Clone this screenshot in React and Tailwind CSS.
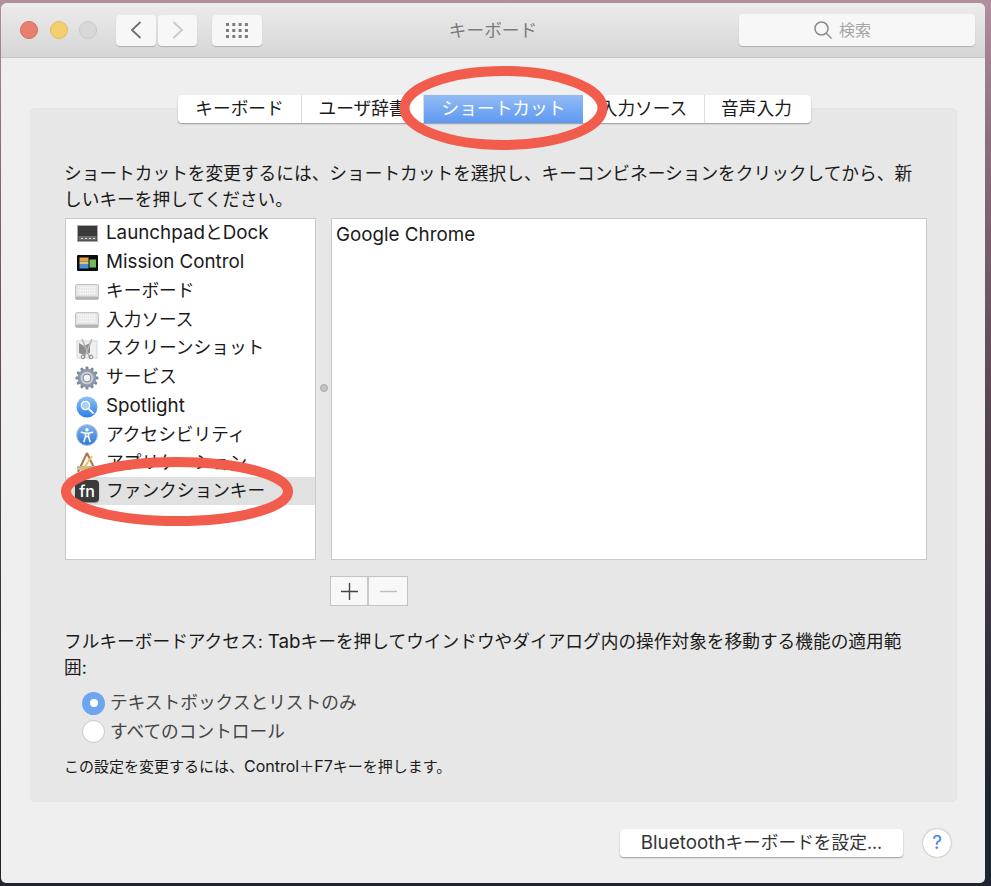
import React from "react";

const tabs = [
  { label: "キーボード", width: "w-[124px]" },
  { label: "ユーザ辞書", width: "w-[122px]" },
  { label: "ショートカット", width: "w-[159px]", active: true },
  { label: "入力ソース", width: "w-[122px]" },
  { label: "音声入力", width: "w-[106px] pr-[3px]" },
];

function ScreenIcon() {
  return (
    <svg width="21" height="17" viewBox="0 0 21 17">
      <rect x="0.5" y="0.5" width="20" height="16" fill="#3a3a3a" stroke="#aaa" />
      <rect x="1.500" y="11" width="18" height="4.500" fill="#6b6b6b" />
      <path d="M4 13.500h2M8 13.500h2M12 13.500h2M16 13.500h2" stroke="#ddd" strokeWidth="1.200" />
    </svg>
  );
}

function MissionIcon() {
  return (
    <svg width="21" height="16" viewBox="0 0 21 16">
      <rect width="21" height="16" rx="1" fill="#0c0c0c" />
      <rect x="2.500" y="2.500" width="9" height="4" fill="#e8a04a" />
      <rect x="2.500" y="6.500" width="9" height="2.500" fill="#d9c27a" />
      <rect x="2.500" y="9" width="9" height="4.500" fill="#4f8fdc" />
      <rect x="12.500" y="4.500" width="6.500" height="8" fill="#74b85c" />
    </svg>
  );
}

function KeyboardIcon() {
  return (
    <svg width="24" height="16" viewBox="0 0 24 16">
      <rect x="0.500" y="0.500" width="23" height="15" rx="1.500" fill="#e4e4e4" stroke="#c4c4c4" />
      <rect x="0.500" y="12.500" width="23" height="3" rx="1.500" fill="#b4b4b4" />
      <path d="M3 3.500h18M3 6.500h18M3 9.500h18" stroke="#fafafa" strokeWidth="2" strokeDasharray="1.500 0.700" />
    </svg>
  );
}

function ScissorsIcon() {
  return (
    <svg width="22" height="22" viewBox="0 0 22 22">
      <rect x="1" y="3" width="20" height="17" fill="#efefef" stroke="#d6d6d6" />
      <path d="M3 5l5 3v9l-5-2zM8 8l6-3v10l-6 2z" fill="#8d8d8d" />
      <path d="M6 1l8 19M16 1L8 20" stroke="#b5b5b5" strokeWidth="1.600" />
      <circle cx="7" cy="19" r="1.800" fill="none" stroke="#8a8a8a" />
      <circle cx="15" cy="19" r="1.800" fill="none" stroke="#8a8a8a" />
    </svg>
  );
}

function GearIcon() {
  const teeth = [0, 30, 60, 90, 120, 150];
  return (
    <svg width="24" height="24" viewBox="0 0 24 24">
      {teeth.map((deg) => (
        <rect key={deg} x="10.500" y="0.500" width="3" height="23" rx="1" fill="#7c8698" transform={`rotate(${deg} 12 12)`} />
      ))}
      <circle cx="12" cy="12" r="9.300" fill="#8e98a9" />
      <circle cx="12" cy="12" r="6.500" fill="#c9ced6" />
      <circle cx="12" cy="12" r="4" fill="#f4f4f4" stroke="#7c8698" />
    </svg>
  );
}

function SpotlightIcon() {
  return (
    <svg width="22" height="22" viewBox="0 0 22 22">
      <defs>
        <linearGradient id="spot" x1="0" y1="0" x2="0" y2="1">
          <stop offset="0" stopColor="#8fc2f7" />
          <stop offset="1" stopColor="#2c7fe8" />
        </linearGradient>
      </defs>
      <circle cx="11" cy="11" r="10.500" fill="url(#spot)" />
      <circle cx="9.500" cy="9.500" r="4.200" fill="#a9d0f8" stroke="#fff" strokeWidth="1.200" />
      <path d="M12.800 12.800l4.200 4.200" stroke="#fff" strokeWidth="1.800" strokeLinecap="round" />
    </svg>
  );
}

function AccessIcon() {
  return (
    <svg width="22" height="22" viewBox="0 0 22 22">
      <defs>
        <linearGradient id="acc" x1="0" y1="0" x2="0" y2="1">
          <stop offset="0" stopColor="#83b4ea" />
          <stop offset="1" stopColor="#2f78d6" />
        </linearGradient>
      </defs>
      <circle cx="11" cy="11" r="10.500" fill="url(#acc)" stroke="#b9c6d6" />
      <circle cx="11" cy="5.800" r="1.700" fill="#fff" />
      <path d="M5.500 8.300l4 1v3.200L8 17.500M16.500 8.300l-4 1v3.200l1.500 5M9.500 9.300h3M9.600 12.500h2.800" stroke="#fff" strokeWidth="1.600" fill="none" strokeLinecap="round" />
    </svg>
  );
}

function AppIcon() {
  return (
    <svg width="24" height="24" viewBox="0 0 24 24">
      <path d="M12 2L3 21M12 2l9 19" stroke="#a9744f" strokeWidth="2" fill="none" />
      <path d="M2 17h20" stroke="#cdb690" strokeWidth="4" />
      <path d="M17 5L5 23" stroke="#e2c25a" strokeWidth="2" />
    </svg>
  );
}

function FnIcon() {
  return (
    <div className="flex h-[22px] w-[24px] items-center justify-center rounded-[4px] bg-[#3b3b3b] text-[16px] font-medium leading-none text-white shadow-[0_1px_1px_rgba(0,0,0,0.4)]">
      fn
    </div>
  );
}

const items = [
  {
    label: (
      <>
        <span className="text-[18.800px]">Launchpad</span>と<span className="text-[18.800px]">Dock</span>
      </>
    ),
    icon: <ScreenIcon />,
    height: "h-[29px]",
  },
  { label: <span className="text-[18.800px]">Mission Control</span>, icon: <MissionIcon />, height: "h-[29px]" },
  { label: "キーボード", icon: <KeyboardIcon />, height: "h-[29px]" },
  { label: "入力ソース", icon: <KeyboardIcon />, height: "h-[28px]" },
  { label: "スクリーンショット", icon: <ScissorsIcon />, height: "h-[29px]" },
  { label: "サービス", icon: <GearIcon />, height: "h-[29px]" },
  { label: <span className="text-[18.800px]">Spotlight</span>, icon: <SpotlightIcon />, height: "h-[29px]" },
  { label: "アクセシビリティ", icon: <AccessIcon />, height: "h-[28px]" },
  { label: "アプリケーション", icon: <AppIcon />, height: "h-[28px]" },
  { label: "ファンクションキー", icon: <FnIcon />, height: "h-[28px]", selected: true },
];

export default function App() {
  return (
    <div
      className="relative h-[886px] w-[991px] overflow-hidden bg-[linear-gradient(180deg,#b0909f_0%,#8d6f7f_15%,#5a4650_45%,#1e2530_90%)] pl-px pt-[3px] text-[#1a1a1a]"
      style={{ fontFamily: 'Inter, "Noto Sans CJK JP", sans-serif' }}
    >
      <div className="flex h-[880px] w-[984px] flex-col overflow-hidden rounded-t-[6px] rounded-b-[5px] bg-[#efefef]">
        {/* title bar */}
        <div className="relative flex h-[55px] shrink-0 items-center border-b border-[#c6c6c6] bg-[linear-gradient(180deg,#ececec,#d6d6d6)]">
          <div className="ml-[19px] flex gap-[11.500px]">
            <div className="h-[18px] w-[18px] rounded-full border border-[#d9685c] bg-[#e8806f]" />
            <div className="h-[18px] w-[18px] rounded-full border border-[#e3b95c] bg-[#f5cf6d]" />
            <div className="h-[18px] w-[18px] rounded-full border border-[#c9c9c9] bg-[#d8d8d8]" />
          </div>
          <div className="ml-[19px] flex gap-[2px]">
            <div className="flex h-[31px] w-[40px] items-center justify-center rounded-[4px] bg-[#f7f7f7] shadow-[0_1px_1px_rgba(0,0,0,0.2)]">
              <svg width="12" height="18" viewBox="0 0 12 18">
                <path d="M10.500 1L2 9l8.500 8" fill="none" stroke="#6f6f6f" strokeWidth="1.800" />
              </svg>
            </div>
            <div className="flex h-[31px] w-[39px] items-center justify-center rounded-[4px] bg-[#f7f7f7] shadow-[0_1px_1px_rgba(0,0,0,0.2)]">
              <svg width="12" height="18" viewBox="0 0 12 18">
                <path d="M1.500 1L10 9l-8.500 8" fill="none" stroke="#c9c9c9" strokeWidth="1.800" />
              </svg>
            </div>
          </div>
          <div className="ml-[15px] flex h-[31px] w-[50px] items-center justify-center rounded-[4px] bg-[#f7f7f7] shadow-[0_1px_1px_rgba(0,0,0,0.2)]">
            <svg width="22" height="15" viewBox="0 0 22 15" fill="#7d7d7d">
              {[0, 6, 12].map((y) =>
                [0, 6.300, 12.600, 18.900].map((x) => <rect key={`${x}-${y}`} x={x} y={y} width="3" height="3" />)
              )}
            </svg>
          </div>
          <div className="ml-[185px] w-[92px] pt-[3px] text-center text-[17.700px] text-[#7b7b7b]">キーボード</div>
          <div className="ml-auto mr-[10px] flex h-[32px] w-[236px] items-center gap-[6px] rounded-[4px] bg-[#f7f7f7] pl-[74px] shadow-[0_1px_1px_rgba(0,0,0,0.2)]">
            <svg width="20" height="20" viewBox="0 0 20 20" fill="none" stroke="#8a8a8a" strokeWidth="1.500">
              <circle cx="8.500" cy="8.500" r="6.500" />
              <path d="M13.300 13.300L18.500 18.500" />
            </svg>
            <span className="text-[16px] text-[#a5a5a5]">検索</span>
          </div>
        </div>

        {/* content */}
        <div className="flex flex-1 flex-col pl-[29px] pr-[28px] pt-[50px]">
          <div className="relative h-[694px] rounded-[5px] border border-[#e3e3e3] bg-[#e7e7e7] pl-[34px] pr-[29px]">
            <div className="absolute left-[147px] top-[-14px] flex h-[28px] rounded-[4px] bg-white shadow-[0_1px_1.500px_rgba(0,0,0,0.35)]">
              {tabs.map((tab, index) => (
                <div
                  key={tab.label}
                  className={`flex items-center justify-center text-[17.700px] ${tab.width} ${
                    tab.active
                      ? "bg-[linear-gradient(180deg,#93bcf4,#5d98f2)] text-white"
                      : index < tabs.length - 1
                        ? "border-r border-[#dcdcdc]"
                        : ""
                  }`}
                >
                  {tab.label}
                </div>
              ))}
            </div>

            <p className="-ml-px max-w-[852px] pt-[52px] text-[17.700px] leading-[26px]">
              ショートカットを変更するには、ショートカットを選択し、キーコンビネーションをクリックしてから、新しいキーを押してください。
            </p>

            <div className="mt-[5px] flex h-[342px]">
              <div className="w-[251px] shrink-0 border border-[#c9c9c9] bg-white">
                {items.map((item, index) => (
                  <div
                    key={index}
                    className={`flex items-center text-[17.700px] ${item.height} ${item.selected ? "bg-[#e1e1e1]" : ""}`}
                  >
                    <div className="flex w-[40px] shrink-0 items-center justify-center pl-[2px]">{item.icon}</div>
                    <span>{item.label}</span>
                  </div>
                ))}
              </div>
              <div className="flex w-[15px] shrink-0 items-center justify-center pb-[2px]">
                <div className="h-[8px] w-[8px] rounded-full border border-[#a9a9a9] bg-[#c2c2c2]" />
              </div>
              <div className="w-[596px] shrink-0 border border-[#c9c9c9] bg-white pl-[4px] pt-[3px] text-[18.800px] leading-[26px]">
                Google Chrome
              </div>
            </div>

            <div className="ml-[265px] mt-[16px] flex h-[30px] w-[78px] border border-[#c4c4c4] bg-[#f8f8f8]">
              <div className="flex w-[38px] items-center justify-center border-r-2 border-[#c9c9c9]">
                <svg width="17" height="17" viewBox="0 0 17 17">
                  <path d="M0 8.500h17M8.500 0v17" stroke="#444" strokeWidth="1.400" />
                </svg>
              </div>
              <div className="flex flex-1 items-center justify-center">
                <svg width="17" height="3" viewBox="0 0 17 3">
                  <path d="M0 1.500h17" stroke="#bdbdbd" strokeWidth="1.400" />
                </svg>
              </div>
            </div>

            <p className="-ml-px mt-[23px] max-w-[858px] text-[17.700px] leading-[26px]">
              フルキーボードアクセス: <span className="text-[18.800px]">Tab</span>キーを押してウインドウやダイアログ内の操作対象を移動する機能の適用範囲:
            </p>

            <div className="ml-[17px] mt-[9px] flex items-center gap-[5px] text-[17.700px] text-[#444]">
              <div className="flex h-[23px] w-[23px] items-center justify-center rounded-full bg-[#6fa5f0]">
                <div className="h-[8px] w-[8px] rounded-full bg-white" />
              </div>
              <span>テキストボックスとリストのみ</span>
            </div>
            <div className="ml-[17px] mt-[2px] flex items-center gap-[5px] text-[17.700px] text-[#444]">
              <div className="h-[23px] w-[23px] rounded-full border border-[#c6c6c6] bg-white" />
              <span>すべてのコントロール</span>
            </div>

            <p className="-ml-px mt-[10px] text-[15px] leading-[22px]">
              この設定を変更するには、<span className="text-[16px]">Control</span>＋<span className="text-[16px]">F7</span>キーを押します。
            </p>
          </div>

          <div className="mt-[27px] flex items-center justify-end pr-[6px]">
            <div className="flex h-[28px] w-[283px] items-center justify-center rounded-[4px] bg-white text-[17.700px] text-[#333] shadow-[0_1px_1.500px_rgba(0,0,0,0.35)]">
              <span className="text-[18.800px]">Bluetooth</span>キーボードを設定...
            </div>
            <div className="ml-[20px] flex h-[28px] w-[28px] items-center justify-center rounded-full bg-white text-[19px] text-[#3b82f0] shadow-[0_0_1.500px_rgba(0,0,0,0.5)]">
              ?
            </div>
          </div>
        </div>
      </div>

      {/* red hand-drawn circles over the screenshot */}
      <svg className="absolute left-0 top-0" width="991" height="886" fill="none" stroke="#f25c4d">
        <ellipse cx="503.500" cy="108" rx="99" ry="37" strokeWidth="10" />
        <ellipse cx="177" cy="491.500" rx="111" ry="29.500" strokeWidth="10" />
      </svg>
    </div>
  );
}
